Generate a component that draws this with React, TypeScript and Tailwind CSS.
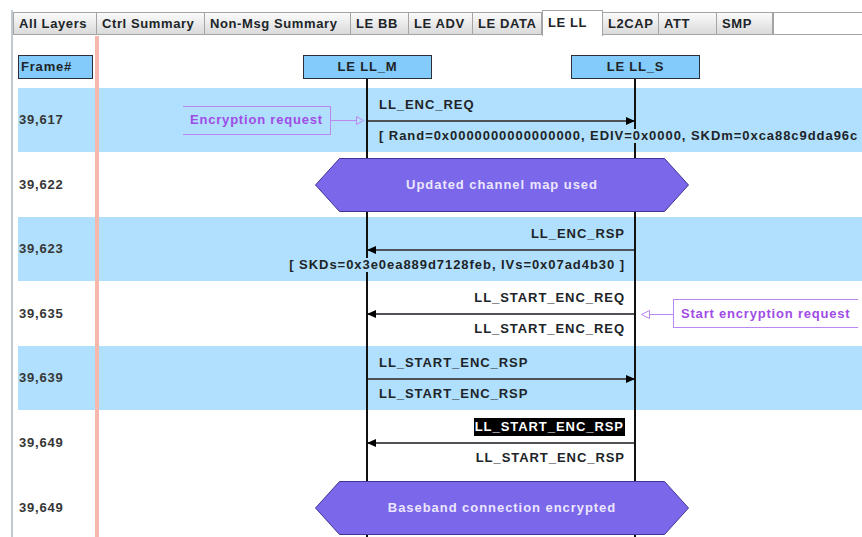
import React from "react";

const tabs = [
  { name: "All Layers", w: "w-[84px] border-l" },
  { name: "Ctrl Summary", w: "w-[108px]" },
  { name: "Non-Msg Summary", w: "w-[146px]" },
  { name: "LE BB", w: "w-[58px]" },
  { name: "LE ADV", w: "w-[64px]" },
  { name: "LE DATA", w: "w-[69px]" },
  { name: "LE LL", w: "w-[61px]", active: true },
  { name: "L2CAP", w: "w-[56px]" },
  { name: "ATT", w: "w-[58px]" },
  { name: "SMP", w: "w-[56px]" },
];

const Label = ({
  text,
  right,
  blue,
  hilite,
  className = "",
}: {
  text: string;
  right: boolean;
  blue: boolean;
  hilite?: boolean;
  className?: string;
}) => (
  <div
    className={`flex h-[14px] items-center ${
      right ? "justify-start pl-[12px]" : "justify-end pr-[10px]"
    } ${className}`}
  >
    <span
      className={`relative z-[2] shrink-0 whitespace-nowrap leading-[14px] ${
        hilite
          ? "bg-black px-[1px] py-[2px] text-white"
          : blue
          ? "bg-[#b0e0fd]"
          : "bg-white"
      }`}
    >
      {text}
    </span>
  </div>
);

const Message = ({
  dir,
  top,
  bottom,
  blue,
  hilite,
}: {
  dir: "right" | "left";
  top: string;
  bottom: string;
  blue: boolean;
  hilite?: boolean;
}) => {
  const right = dir === "right";
  return (
    <div className="flex w-[268px] shrink-0 flex-col">
      <Label text={top} right={right} blue={blue} hilite={hilite} />
      <div className="relative mt-[8px] h-[2px] bg-[#4f5358]">
        {right ? (
          <div className="absolute right-0 top-1/2 z-[2] h-0 w-0 -translate-y-1/2 border-y-[4px] border-l-[9px] border-y-transparent border-l-black" />
        ) : (
          <div className="absolute left-0 top-1/2 z-[2] h-0 w-0 -translate-y-1/2 border-y-[4px] border-r-[9px] border-y-transparent border-r-black" />
        )}
      </div>
      <Label text={bottom} right={right} blue={blue} className="mt-[7px]" />
    </div>
  );
};

const Hex = ({ text }: { text: string }) => (
  <div className="relative z-[2] ml-[216px] h-[54px] w-[374px] shrink-0">
    <svg width="374" height="54" className="absolute inset-0">
      <polygon
        points="24.5,0.5 349.5,0.5 373.5,27 349.5,53.5 24.5,53.5 0.5,27"
        fill="#7a67e9"
        stroke="#3f3596"
      />
    </svg>
    <div className="relative flex h-full items-center justify-center text-[#ece6ff]">
      {text}
    </div>
  </div>
);

const Row = ({
  frame,
  blue,
  h,
  children,
}: {
  frame: string;
  blue?: boolean;
  h: string;
  children: React.ReactNode;
}) => (
  <div className={`flex shrink-0 ${h} ${blue ? "bg-[#b0e0fd]" : "bg-white"}`}>
    <div className="flex w-[77px] items-center pl-[1px] tracking-[0.8px] text-[#363636]">{frame}</div>
    <div className="w-[4px] bg-[#f6b8ad]" />
    <div className="flex flex-1 items-center">{children}</div>
  </div>
);

export default function App() {
  return (
    <div className="h-[537px] w-[862px] overflow-hidden bg-white pl-[11px] pt-[10px] font-['Liberation_Sans',Arial,sans-serif] text-[13px] font-bold tracking-[0.95px] text-[#202428]">
      <div className="flex h-full flex-col border-l-2 border-[#c3c9d1]">
        {/* tab strip */}
        <div className="flex h-[26px] shrink-0 items-start tracking-[0.6px]">
          {tabs.map((t) =>
            t.active ? (
              <div
                key={t.name}
                className={`${t.w} h-[26px] shrink-0 whitespace-nowrap border-x border-t border-[#9ea4aa] bg-white px-[5px] pt-[5px] leading-[14px]`}
              >
                {t.name}
              </div>
            ) : (
              <div
                key={t.name}
                className={`${t.w} mt-[2px] h-[23px] shrink-0 overflow-hidden whitespace-nowrap border-y border-r border-[#a4a4a4] bg-linear-to-b from-[#fbfbfb] to-[#dadada] px-[5px] leading-[21px]`}
              >
                {t.name}
              </div>
            )
          )}
          <div className="mt-[2px] h-[23px] flex-1 border-y border-l border-[#a4a4a4] bg-white" />
        </div>

        {/* sequence chart */}
        <div className="relative flex-1 pl-[5px]">
          <div className="flex h-[52px] tracking-[0.8px]">
            <div className="w-[77px] pt-[19px]">
              <div className="h-[24px] w-[75px] border border-[#2c2f38] bg-[#82cbfa] pl-[2px] leading-[22px]">
                Frame#
              </div>
            </div>
            <div className="w-[4px] bg-[#f6b8ad]" />
            <div className="flex flex-1 pt-[19px]">
              <div className="ml-[204px] h-[24px] w-[129px] border border-[#2c2f38] bg-[#82cbfa] text-center leading-[22px]">
                LE LL_M
              </div>
              <div className="ml-[139px] h-[24px] w-[129px] border border-[#2c2f38] bg-[#82cbfa] text-center leading-[22px]">
                LE LL_S
              </div>
            </div>
          </div>

          <Row frame="39,617" blue h="h-[64px]">
            <div className="w-[84px] shrink-0" />
            <div className="flex h-[29px] w-[148px] shrink-0 items-center border-y border-r border-[#bb88f2] pl-[7px] tracking-[0.8px] text-[#a04ce6]">
              Encryption request
            </div>
            <svg width="36" height="12" className="shrink-0">
              <line x1="0" y1="6.5" x2="25" y2="6.5" stroke="#bb88f2" />
              <polygon points="25.5,2.5 32.5,6.5 25.5,10.5" fill="none" stroke="#bb88f2" />
            </svg>
            <Message
              dir="right"
              blue
              top="LL_ENC_REQ"
              bottom="[ Rand=0x0000000000000000, EDIV=0x0000, SKDm=0xca88c9dda96c"
            />
          </Row>

          <Row frame="39,622" h="h-[65px]">
            <Hex text="Updated channel map used" />
          </Row>

          <Row frame="39,623" blue h="h-[64px]">
            <div className="w-[268px] shrink-0" />
            <Message
              dir="left"
              blue
              top="LL_ENC_RSP"
              bottom="[ SKDs=0x3e0ea889d7128feb, IVs=0x07ad4b30 ]"
            />
          </Row>

          <Row frame="39,635" h="h-[65px]">
            <div className="w-[268px] shrink-0" />
            <Message dir="left" blue={false} top="LL_START_ENC_REQ" bottom="LL_START_ENC_REQ" />
            <svg width="38" height="12" className="shrink-0">
              <polygon points="6.5,6.5 14.5,2.5 14.5,10.5" fill="none" stroke="#bb88f2" />
              <line x1="14.5" y1="6.5" x2="38" y2="6.5" stroke="#bb88f2" />
            </svg>
            <div className="flex h-[29px] w-[185px] shrink-0 items-center border-y border-l border-[#bb88f2] pl-[7px] tracking-[0.8px] text-[#a04ce6]">
              Start encryption request
            </div>
          </Row>

          <Row frame="39,639" blue h="h-[64px]">
            <div className="w-[268px] shrink-0" />
            <Message dir="right" blue top="LL_START_ENC_RSP" bottom="LL_START_ENC_RSP" />
          </Row>

          <Row frame="39,649" h="h-[65px]">
            <div className="w-[268px] shrink-0" />
            <Message
              dir="left"
              blue={false}
              hilite
              top="LL_START_ENC_RSP"
              bottom="LL_START_ENC_RSP"
            />
          </Row>

          <Row frame="39,649" h="h-[65px]">
            <Hex text="Baseband connection encrypted" />
          </Row>

          {/* lifelines */}
          <div className="absolute bottom-0 left-[353px] top-[43px] z-[1] w-[2px] bg-[#111]" />
          <div className="absolute bottom-0 left-[621px] top-[43px] z-[1] w-[2px] bg-[#111]" />
        </div>
      </div>
    </div>
  );
}
